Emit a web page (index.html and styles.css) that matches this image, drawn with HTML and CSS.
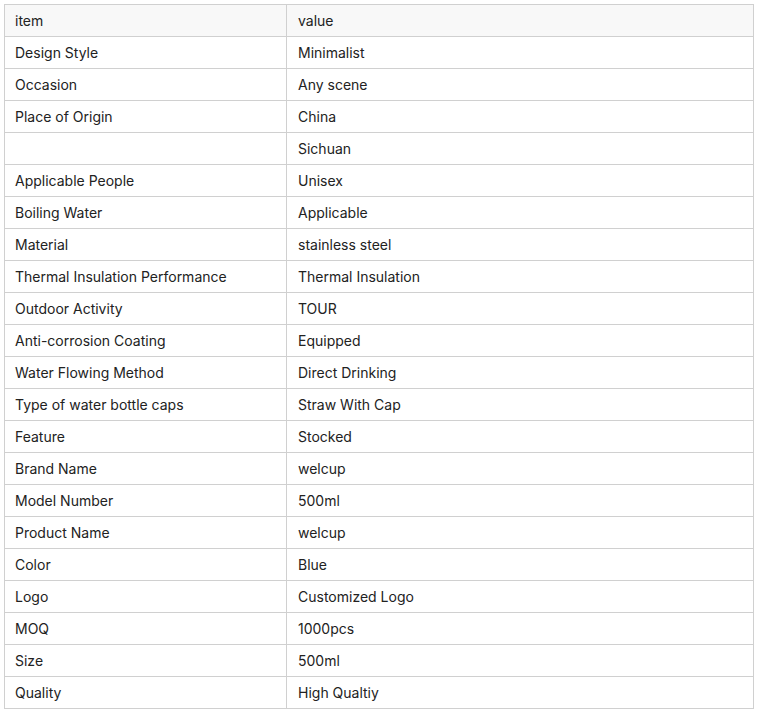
FILE: index.html
```html
<!DOCTYPE html>
<html>
<head>
<meta charset="utf-8">
<link rel="stylesheet" href="styles.css">
</head>
<body>
<table class="spec">
<colgroup><col class="c1"><col class="c2"></colgroup>
<thead>
<tr><th>item</th><th>value</th></tr>
</thead>
<tbody>
<tr><td>Design Style</td><td>Minimalist</td></tr>
<tr><td>Occasion</td><td>Any scene</td></tr>
<tr><td>Place of Origin</td><td>China</td></tr>
<tr><td></td><td>Sichuan</td></tr>
<tr><td>Applicable People</td><td>Unisex</td></tr>
<tr><td>Boiling Water</td><td>Applicable</td></tr>
<tr><td>Material</td><td>stainless steel</td></tr>
<tr><td>Thermal Insulation Performance</td><td>Thermal Insulation</td></tr>
<tr><td>Outdoor Activity</td><td>TOUR</td></tr>
<tr><td>Anti-corrosion Coating</td><td>Equipped</td></tr>
<tr><td>Water Flowing Method</td><td>Direct Drinking</td></tr>
<tr><td>Type of water bottle caps</td><td>Straw With Cap</td></tr>
<tr><td>Feature</td><td>Stocked</td></tr>
<tr><td>Brand Name</td><td>welcup</td></tr>
<tr><td>Model Number</td><td>500ml</td></tr>
<tr><td>Product Name</td><td>welcup</td></tr>
<tr><td>Color</td><td>Blue</td></tr>
<tr><td>Logo</td><td>Customized Logo</td></tr>
<tr><td>MOQ</td><td>1000pcs</td></tr>
<tr><td>Size</td><td>500ml</td></tr>
<tr><td>Quality</td><td>High Qualtiy</td></tr>
</tbody>
</table>
</body>
</html>
```
FILE: styles.css
```css
html, body {
  margin: 0;
  background: #ffffff;
}
body {
  padding: 4px;
  font-family: Inter, "Noto Sans", sans-serif;
  font-size: 14px;
  color: #222222;
}
.spec {
  width: 750px;
  border-collapse: collapse;
  table-layout: fixed;
}
.c1 { width: 282px; }
.spec th,
.spec td {
  border: 1px solid #d0d0d0;
  height: 32px;
  padding: 0 10px;
  text-align: left;
  font-weight: 400;
  box-sizing: border-box;
  line-height: 17px;
}
.spec th {
  background: #f8f8f8;
}
.spec td:nth-child(2),
.spec th:nth-child(2) {
  padding-left: 11px;
}
```
